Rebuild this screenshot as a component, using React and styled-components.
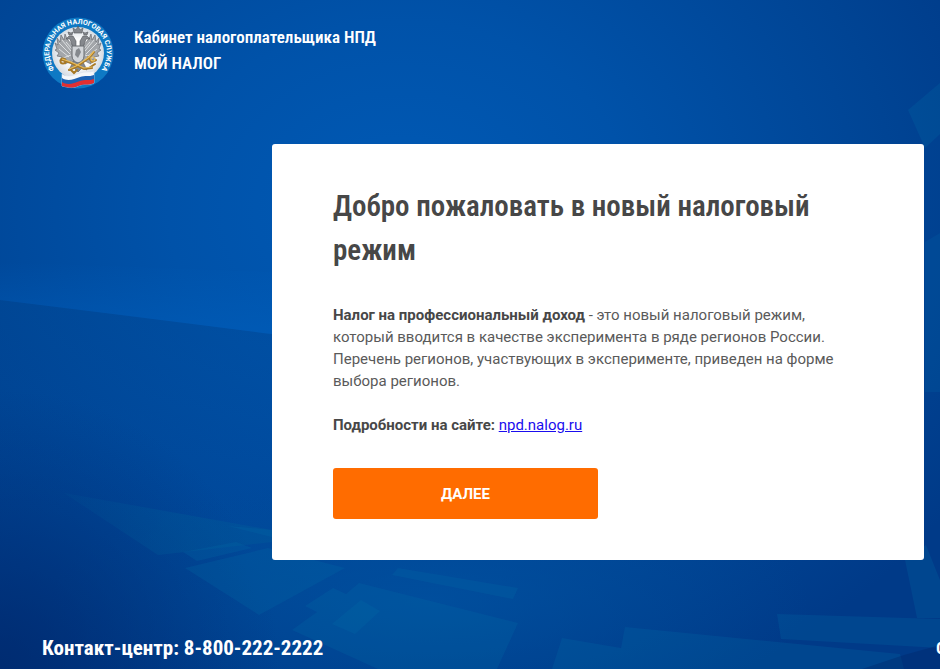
import React from 'react'
import styled, { createGlobalStyle } from 'styled-components'

const FONT_BODY = "Roboto, 'Noto Sans', sans-serif"
const FONT_HEADING = "'Roboto Condensed', Roboto, sans-serif"

export default function App() {
  return (
    <Page>
      <GlobalStyle />
      <Backdrop />
      <Header>
        <Emblem />
        <Brand>
          Кабинет налогоплательщика НПД
          <br />
          МОЙ НАЛОГ
        </Brand>
      </Header>
      <Main>
        <Card>
          <Title>Добро пожаловать в новый налоговый режим</Title>
          <Text>
            <b>Налог на профессиональный доход</b> - это новый налоговый режим,
            который вводится в качестве эксперимента в ряде регионов России.
            Перечень регионов, участвующих в эксперименте, приведен на форме
            выбора регионов.
          </Text>
          <Text>
            <b>Подробности на сайте:</b>{' '}
            <SiteLink href="https://npd.nalog.ru">npd.nalog.ru</SiteLink>
          </Text>
          <NextButton type="button">ДАЛЕЕ</NextButton>
        </Card>
      </Main>
      <Footer>
        <Contact>Контакт-центр: 8-800-222-2222</Contact>
        <FooterEdge>О</FooterEdge>
      </Footer>
    </Page>
  )
}

function Backdrop() {
  return (
    <BackdropSvg
      viewBox="0 0 940 669"
      preserveAspectRatio="none"
      aria-hidden="true"
    >
      <defs>
        <radialGradient
          id="glow"
          gradientUnits="userSpaceOnUse"
          cx="0"
          cy="0"
          r="1"
          gradientTransform="translate(400 210) scale(660 540)"
        >
          <stop offset="0" stopColor="#005ab6" />
          <stop offset="0.35" stopColor="#0052a9" />
          <stop offset="0.75" stopColor="#004494" />
          <stop offset="1" stopColor="#003a88" />
        </radialGradient>
        <radialGradient
          id="corner"
          gradientUnits="userSpaceOnUse"
          cx="0"
          cy="669"
          r="280"
        >
          <stop offset="0" stopColor="#002465" stopOpacity="0.65" />
          <stop offset="1" stopColor="#002a70" stopOpacity="0" />
        </radialGradient>
        <radialGradient
          id="floor"
          gradientUnits="userSpaceOnUse"
          cx="0"
          cy="0"
          r="1"
          gradientTransform="translate(430 600) scale(380 130)"
        >
          <stop offset="0" stopColor="#0052a0" stopOpacity="0.7" />
          <stop offset="1" stopColor="#004b96" stopOpacity="0" />
        </radialGradient>
        <linearGradient id="beam" x1="0" y1="0" x2="0" y2="1">
          <stop offset="0" stopColor="#0060be" stopOpacity="0" />
          <stop offset="1" stopColor="#0060be" stopOpacity="0.5" />
        </linearGradient>
        <linearGradient id="shade" x1="0" y1="0" x2="0" y2="1">
          <stop offset="0" stopColor="#004288" stopOpacity="0.3" />
          <stop offset="1" stopColor="#003c86" stopOpacity="0" />
        </linearGradient>
        <linearGradient id="facet" x1="0" y1="0" x2="1" y2="0">
          <stop offset="0" stopColor="#006099" stopOpacity="0.1" />
          <stop offset="0.6" stopColor="#006099" stopOpacity="0.3" />
        </linearGradient>
      </defs>
      <rect width="940" height="669" fill="url(#glow)" />
      <path d="M0 300Q130 316 272 334V520H0Z" fill="url(#shade)" />
      <path d="M0 262L272 272V334Q130 316 0 300Z" fill="url(#beam)" />
      <rect width="940" height="669" fill="url(#floor)" />
      <rect width="940" height="669" fill="url(#corner)" />
      <path d="M64 493L272 530V542L158 555Z" fill="url(#facet)" />
      <g fill="#006ba8" fillOpacity="0.24">
        <path d="M183 552L236 542L252 548L197 561Z" />
        <path d="M228 526L272 530V537Z" />
        <path d="M185 568L268 548L345 568L259 615Z" />
        <path d="M398 568L518 588L513 599L392 575Z" />
        <path d="M292 630L317 612L305 606L333 588L346 594L359 583L518 623L497 669H378Z" />
        <path d="M332 624L361 600L380 611L355 634Z" />
        <path d="M562 638L621 648L625 627L900 654L904 669H552Z" />
        <path d="M777 614L940 619V648L781 639Z" />
        <path d="M905 560L926 545L940 580V618H917Z" />
        <path d="M940 83L908 110L925 148L940 134Z" />
      </g>
      <path d="M925 242L940 233V392H925Z" fill="#0069aa" fillOpacity="0.2" />
      <path d="M862 669L904 655L940 645V669Z" fill="#002468" fillOpacity="0.35" />
    </BackdropSvg>
  )
}

function Emblem() {
  return (
    <EmblemSvg viewBox="0 0 72 74" role="img" aria-label="ФНС России">
      <defs>
        <path id="ring" d="M14 55.5A28.8 28.8 0 1 1 58 55.5" />
        <radialGradient id="disc">
          <stop offset="0.5" stopColor="#ffffff" />
          <stop offset="1" stopColor="#d5dbe2" />
        </radialGradient>
      </defs>
      <circle cx="36" cy="37" r="35.5" fill="#0e79c4" />
      <circle cx="36" cy="37" r="26" fill="url(#disc)" />
      <RingText>
        <textPath href="#ring" startOffset="50%" textAnchor="middle">
          ФЕДЕРАЛЬНАЯ НАЛОГОВАЯ СЛУЖБА
        </textPath>
      </RingText>
      {/* wings */}
      <g fill="#a3a6aa" stroke="#6a6d72" strokeWidth="0.7">
        <path d="M33 29C29 29 28 26 25 23L23 18L22 24L19 19L18 26L15 22L16 29L13 27L15 33L13 34L17 37L15 40L20 41L18 45L24 43L23 48L29 45L33 47Z" />
        <path d="M39 29C43 29 44 26 47 23L49 18L50 24L53 19L54 26L57 22L56 29L59 27L57 33L59 34L55 37L57 40L52 41L54 45L48 43L49 48L43 45L39 47Z" />
      </g>
      <g fill="none" stroke="#e3e5e8" strokeWidth="0.9">
        <path d="M17 27L28 38M20 24L29 35M24 26L30 33M17 33L27 41M21 42L29 39" />
        <path d="M55 27L44 38M52 24L43 35M48 26L42 33M55 33L45 41M51 42L43 39" />
      </g>
      {/* heads, crowns and tail */}
      <g fill="#85888d" stroke="#54585d" strokeWidth="0.6">
        <path d="M34 34V25L31 20L27 20L24 23L28 23L29 26L31 31Z" />
        <path d="M38 34V25L41 20L45 20L48 23L44 23L43 26L41 31Z" />
        <path d="M32 17L31 12L34 14L36 10L38 14L41 12L40 17Z" />
        <path d="M27 19L26 16L29 17L31 16L30 19ZM42 19L41 16L43 17L46 16L45 19Z" />
        <path d="M32 44L27 54L32 52L36 56L40 52L45 54L40 44Z" />
      </g>
      <path
        d="M30 30H42V40Q42 45 36 47Q30 45 30 40Z"
        fill="#d2d5d9"
        stroke="#686c71"
      />
      <path d="M34 34L37 32L39 36L36 42L33 39Z" fill="#85898e" />
      {/* crossed staff and key */}
      <g fill="none" stroke="#a87925" strokeWidth="2" strokeLinecap="round">
        <path d="M20 44L29 47L42 53L50 52" />
        <path d="M27 54L34 51L47 42L52 36" />
        <circle cx="21" cy="45" r="2.5" />
        <path d="M46 41L50 46L54 44M47 52L53 48M29 54L32 57L35 54" />
      </g>
      <g fill="none" stroke="#e9bd5c" strokeWidth="1.2">
        <path d="M20 43L29 46L42 52L50 51" />
        <path d="M27 53L34 50L47 41L52 35" />
        <circle cx="51" cy="43" r="2" />
      </g>
      {/* flag */}
      <path
        d="M20 58C26 62 32 59 38 57C43 55 47 57 52 55V67C46 70 42 67 36 70C30 73 25 71 20 70Z"
        fill="#f5f7fa"
        stroke="#d8e1ec"
        strokeWidth="0.6"
      />
      <path
        d="M20 62C26 66 32 63 38 61C43 59 47 61 52 59V67C46 70 42 67 36 70C30 73 25 71 20 70Z"
        fill="#1c61b4"
      />
      <path
        d="M20 66C26 70 32 67 38 65C43 63 47 65 52 63V67C46 70 42 67 36 70C30 73 25 71 20 70Z"
        fill="#e22f31"
      />
    </EmblemSvg>
  )
}

const GlobalStyle = createGlobalStyle`
  * {
    box-sizing: border-box;
  }
  body {
    margin: 0;
    background: #003f8c;
    font-family: ${FONT_BODY};
  }
`

const Page = styled.div`
  position: relative;
  display: flex;
  flex-direction: column;
  min-height: 100vh;
  overflow: hidden;
  isolation: isolate;
`

const BackdropSvg = styled.svg`
  position: absolute;
  inset: 0;
  z-index: -1;
  width: 100%;
  height: 100%;
`

const Header = styled.header`
  display: flex;
  align-items: flex-start;
  gap: 20px;
  padding: 16px 42px 0;
`

const EmblemSvg = styled.svg`
  flex: none;
  width: 72px;
  height: 74px;
`

const RingText = styled.text`
  fill: #fff;
  font: bold 7px ${FONT_BODY};
`

const Brand = styled.div`
  padding-top: 8px;
  color: #fff;
  font: 600 17px/26px ${FONT_HEADING};
`

const Main = styled.main`
  flex: 1;
  padding: 54px 16px 40px 272px;
`

const Card = styled.section`
  padding: 40px 61px 41px;
  border-radius: 3px;
  background: #fff;
`

const Title = styled.h1`
  margin: 0 0 32px;
  color: #474747;
  font: 600 29px/44px ${FONT_HEADING};
`

const Text = styled.p`
  margin: 0 0 22px;
  color: #5a5a5a;
  font-size: 15px;
  line-height: 22px;
  b {
    color: #474747;
  }
`

const SiteLink = styled.a`
  color: #1a0dee;
  text-decoration: underline;
`

const NextButton = styled.button`
  display: block;
  width: 50%;
  height: 51px;
  margin-top: 32px;
  border: 0;
  border-radius: 3px;
  background: #ff6c00;
  color: #fff;
  font: bold 15px ${FONT_BODY};
  cursor: pointer;
`

const Footer = styled.footer`
  display: flex;
  align-items: center;
  justify-content: space-between;
  padding: 0 0 4px 42px;
`

const Contact = styled.div`
  color: #fff;
  font: bold 21px/30px ${FONT_HEADING};
`

const FooterEdge = styled.span`
  width: 4px;
  overflow: hidden;
  color: #fff;
  font: bold 17px/34px ${FONT_HEADING};
`
